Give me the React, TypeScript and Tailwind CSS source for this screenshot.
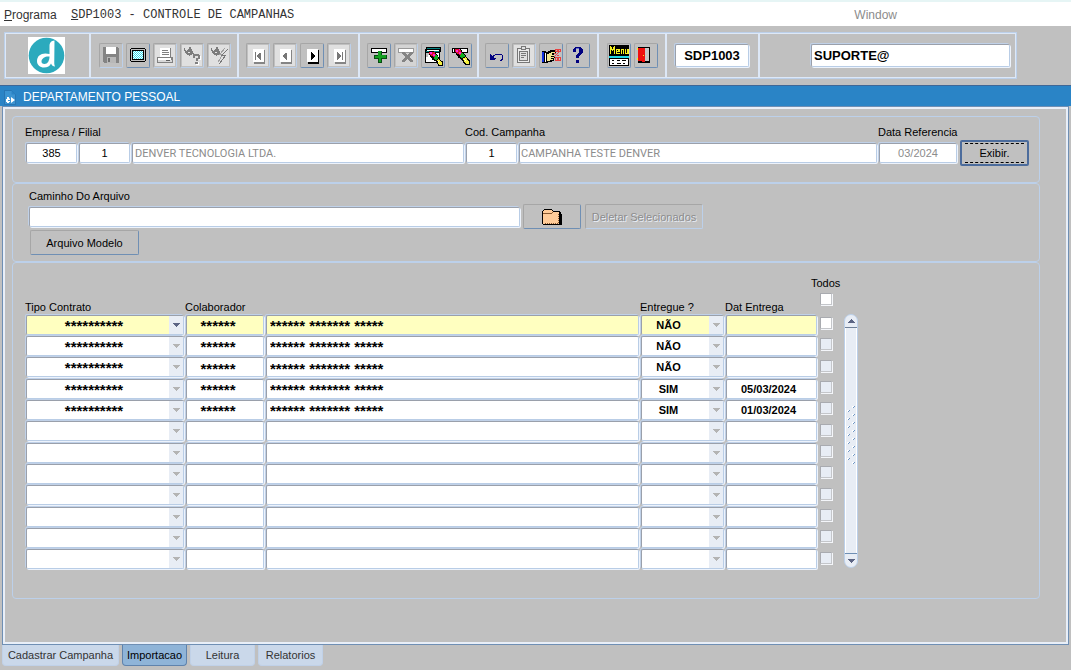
import { useState } from "react"
import type { ReactNode } from "react"

const fieldClass =
  "block min-w-0 rounded-[2px] border border-t-[#9aa0ab] border-l-[#9aa0ab] border-r-[#b9cde6] border-b-[#b9cde6] leading-[14px] shadow-[1px_1px_0_#edf3fc,-1px_-1px_0_#c0d1e8] outline-none"

const editable = "bg-white text-[11px] text-black"
const readOnlyText = "bg-white text-[11px] text-[#8c8c8c]"

const buttonClass =
  "flex items-center justify-center rounded-[2px] border border-t-[#a6a6a6] border-l-[#a6a6a6] border-r-[#6f8fb4] border-b-[#6f8fb4] text-[11px] leading-[14px] text-black disabled:border-r-[#bcd0ea] disabled:border-b-[#bcd0ea] disabled:text-[#8c8c8c]"

const rows = [
  { tipo: "**********", codigo: "******", nome: "****** ******* *****", entregue: "NÃO", data: "" },
  { tipo: "**********", codigo: "******", nome: "****** ******* *****", entregue: "NÃO", data: "" },
  { tipo: "**********", codigo: "******", nome: "****** ******* *****", entregue: "NÃO", data: "" },
  { tipo: "**********", codigo: "******", nome: "****** ******* *****", entregue: "SIM", data: "05/03/2024" },
  { tipo: "**********", codigo: "******", nome: "****** ******* *****", entregue: "SIM", data: "01/03/2024" },
  ...Array.from({ length: 7 }, () => ({ tipo: "", codigo: "", nome: "", entregue: "", data: "" })),
]

const tabs = [
  { name: "Cadastrar Campanha", width: "w-[117px]" },
  { name: "Importacao", width: "w-[65px]" },
  { name: "Leitura", width: "w-[65px]" },
  { name: "Relatorios", width: "w-[65px]" },
]

type Tool = { label: string; disabled?: boolean; icon: ReactNode }

const page = (color: string, shadow: string, glyph: ReactNode, back?: string) => (
  <>
    {back && <path fill={back} d="M1 1h20v21H1z" />}
    <path fill={shadow} d="M7 6h11v14H7z" />
    <path fill="#fff" d="M6 5h11v13H6z" />
    <g fill={color}>{glyph}</g>
  </>
)

const brush = (
  <>
    <path fill="#000" d="M6 4h5v1h1v1h1v2h1v1h1v1h1v1h1v2h1v1h1v1h1v1h1v5h-5v-1h-1v-1h-1v-2h-1v-1h-1v-1h-1v-1H9v-2H8v-1H7V9H6V8H5V5h1z" />
    <path fill="#e01030" d="M6 5h5v1h1v2h1v3h-3v-1H8V9H7V8H6z" />
    <path fill="#ff20e8" d="M7 6h2v2H7zM10 8h2v2h-2zM10 5h1v1h-1z" />
    <path fill="#10b020" d="M12 9h2v1h1v1h1v2h-2v1h-2v-1h-1v-2h1z" />
    <path fill="#f4f040" d="M14 14h2v-1h1v1h1v2h1v1h1v3h-3v-1h-1v-1h-1v-2h-1z" />
    <path fill="#fff" d="M15 15h1v1h1v1h-1v-1h-1z" />
  </>
)

const lamp = (
  <>
    <path fill="#7c7c7c" d="M3 4h1v2h1v1h1V6h1V5h1V3h2v2h1v2h1v2h1v1h-2v1H9v1H8v-1H6v-1H5V9H4V7H3z" />
    <path fill="#e4e4e4" d="M7 8h2v1H7z" />
  </>
)

const fileTools: Tool[] = [
  {
    label: "Salvar",
    disabled: true,
    icon: (
      <>
        <path fill="#848484" d="M3 3h15v1h1v15H4v-1H3z" />
        <path fill="#fff" d="M6 3h10v7H6z" />
        <path fill="#b8b8b8" d="M7 13h9v6H7z" />
        <path fill="#707070" d="M8 14h2v4H8z" />
      </>
    ),
  },
  {
    label: "Tela",
    icon: (
      <>
        <path fill="#000" d="M4 4h14v1h1v12h-1v1H4v-1H3V5h1z" />
        <path fill="#c0c0c0" d="M4 5h14v12H4z" />
        <path fill="#000" d="M5 6h12v10H5z" />
        <path fill="#fff" d="M6 7h10v8H6z" />
        <path
          fill="#30dcec"
          d="M6 7h1v1H6zM8 7h1v1H8zM10 7h1v1h-1zM12 7h1v1h-1zM14 7h1v1h-1zM7 8h1v1H7zM9 8h1v1H9zM11 8h1v1h-1zM13 8h1v1h-1zM15 8h1v1h-1zM6 9h1v1H6zM8 9h1v1H8zM10 9h1v1h-1zM12 9h1v1h-1zM14 9h1v1h-1zM7 10h1v1H7zM9 10h1v1H9zM11 10h1v1h-1zM13 10h1v1h-1zM15 10h1v1h-1zM6 11h1v1H6zM8 11h1v1H8zM10 11h1v1h-1zM12 11h1v1h-1zM14 11h1v1h-1zM7 12h1v1H7zM9 12h1v1H9zM11 12h1v1h-1zM13 12h1v1h-1zM15 12h1v1h-1zM6 13h1v1H6zM8 13h1v1H8zM10 13h1v1h-1zM12 13h1v1h-1zM14 13h1v1h-1zM7 14h1v1H7zM9 14h1v1H9zM11 14h1v1h-1zM13 14h1v1h-1zM15 14h1v1h-1z"
        />
      </>
    ),
  },
  {
    label: "Imprimir",
    disabled: true,
    icon: (
      <>
        <path fill="#e0e0e0" d="M1 1h20v21H1z" />
        <path fill="#808080" d="M6 4h11v10H6zM3 13h16v6H3z" />
        <path fill="#fff" d="M6 4h10v9H6zM4 14h13v2H4z" />
        <path fill="#808080" d="M8 6h6v1H8zM8 8h7v1H8zM8 10h7v1H8z" />
        <path fill="#d8d8d8" d="M4 16h14v2H4z" />
        <path fill="#606060" d="M12 16h4v1h-4z" />
      </>
    ),
  },
  {
    label: "Entrar consulta",
    disabled: true,
    icon: (
      <>
        <path fill="#e0e0e0" d="M1 1h20v21H1z" />
        {lamp}
        <path fill="#808080" d="M12 10h6v1h1v4h-2v2h-2v-3h2v-2h-3v2h-2zM14 18h3v2h-3z" />
        <path fill="#fff" d="M19 12h1v4h-2v-1h1zM17 18h1v3h-3v-1h2z" />
      </>
    ),
  },
  {
    label: "Executar consulta",
    disabled: true,
    icon: (
      <>
        <path fill="#e0e0e0" d="M1 1h20v21H1z" />
        {lamp}
        <path fill="none" stroke="#a0a0a0" d="M17 4l-5 6h3l-5 8" />
        <path fill="none" stroke="#787878" d="M20 5l-6 6h4l-7 9" />
      </>
    ),
  },
]

const navTools: Tool[] = [
  {
    label: "Primeiro",
    disabled: true,
    icon: page("#777", "#858585", <path d="M8 8h1v8H8zM14 8v8h-1v-1h-1v-1h-1v-1h-1v-2h1v-1h1V9h1z" />, "#e0e0e0"),
  },
  {
    label: "Anterior",
    disabled: true,
    icon: page("#777", "#858585", <path d="M13 8v8h-1v-1h-1v-1h-1v-1H9v-2h1v-1h1V9h1z" />, "#e0e0e0"),
  },
  { label: "Proximo", icon: page("#000", "#000", <path d="M10 8v8h1v-1h1v-1h1v-1h1v-2h-1v-1h-1V9h-1z" />) },
  {
    label: "Ultimo",
    disabled: true,
    icon: page("#777", "#858585", <path d="M9 8v8h1v-1h1v-1h1v-1h1v-2h-1v-1h-1V9h-1zM14 8h1v8h-1z" />, "#e0e0e0"),
  },
]

const slip = (stroke: string) => (
  <>
    <path fill={stroke} d="M3 4h16v5H3z" />
    <path fill="#fff" d="M4 5h14v3H4z" />
  </>
)

const editTools: Tool[] = [
  {
    label: "Inserir",
    icon: (
      <>
        {slip("#000")}
        <path fill="#064d10" d="M10 7h4v4h5v4h-5v4h-4v-4H6v-4h4z" />
        <path fill="#12a020" d="M10 7h3v4h5v3h-5v4h-2v-4H7v-2h3z" />
      </>
    ),
  },
  {
    label: "Remover",
    disabled: true,
    icon: (
      <>
        <path fill="#d4d4d4" d="M1 1h20v21H1z" />
        {slip("#999")}
        <path
          fill="#848484"
          d="M7 8h3v1h1v1h1v1h1v-1h1V9h1V8h3v2h-1v1h-1v1h-1v2h1v1h1v1h1v2h-3v-1h-1v-1h-1v-1h-1v1h-1v1h-1v1H7v-2h1v-1h1v-1h1v-2H9v-1H8v-1H7z"
        />
      </>
    ),
  },
  {
    label: "Limpar bloco",
    icon: (
      <>
        <path fill="#000" d="M4 3h15v5h-1v11H3V5h1z" />
        <path fill="#008080" d="M5 4h13v1H5zM4 7h13v1H4z" />
        <path fill="#fff" d="M5 6h12v1H5zM4 9h13v9H4z" />
        <path fill="#c0c0c0" d="M4 9h3v2H6v2H4z" />
        <g transform="translate(2 3) scale(.9)">{brush}</g>
      </>
    ),
  },
  {
    label: "Limpar registro",
    icon: (
      <>
        {slip("#000")}
        {brush}
      </>
    ),
  },
]

const helpTools: Tool[] = [
  {
    label: "Desfazer",
    icon: (
      <>
        <path fill="none" stroke="#000080" d="M7 13c2-4 9-4 10 0 0 2-1 3-3 4" />
        <path fill="#000080" d="M4 10h1v1h1v1h1v1h1v1h2v1H9v1H4z" />
      </>
    ),
  },
  {
    label: "Colar",
    disabled: true,
    icon: (
      <>
        <path fill="#e0e0e0" d="M1 1h20v21H1z" />
        <path fill="#ececec" stroke="#777" d="M4.500 4.500h12v14h-12z" />
        <path fill="#e0e0e0" stroke="#777" d="M8.500 2.500h4v3h-4zM6.500 7.500h8v9h-8z" />
        <path fill="#777" d="M8 9h5v1H8zM8 11h5v1H8zM8 13h3v1H8z" />
      </>
    ),
  },
  {
    label: "Lista de valores",
    icon: (
      <>
        <path fill="#000" d="M2 7h4v1h2V7h2V6h6v3h-2v3h1v2h-1v3h-2v1H8v1H2z" />
        <path fill="#1030e0" d="M2 8h2v10H2z" />
        <path fill="#fff" d="M5 9h1v9H5z" />
        <path fill="#f4e890" d="M7 10h2V9h2V8h4v1h-3v2h2v1h-3v1h3v1h-3v1h2v1h-3v1H7z" />
        <path
          fill="none"
          stroke="#e84040"
          d="M15.500 5.500h2v2h-2zM18.500 5.500h2v2h-2zM14 9l5 3M19 8l-5 5M15.500 13.500h2v3h-2zM18.500 13.500h2v3h-2z"
        />
      </>
    ),
  },
  {
    label: "Ajuda",
    icon: (
      <>
        <path fill="#000080" d="M8 3h6v1h1v1h1v4h-1v1h-1v1h-1v1h-1v2h-3v-3h1v-1h1V9h1V5H9v3H6V5h1V4h1zM9 16h3v3H9z" />
        <path fill="#6870c8" d="M9 4h3v1H9z" />
      </>
    ),
  },
]

const exitTools: Tool[] = [
  {
    label: "Menu",
    icon: (
      <>
        <path fill="#000" d="M1 1h20v11H1z" />
        <path
          fill="none"
          stroke="#f4f020"
          strokeWidth="1.200"
          d="M2.500 10V3l2 3 2-3v7M12 9.500H8.500v-4H11v2H9M13.500 10V5.500h2V10M17.500 5v4.500h2.500V5"
        />
        <path fill="#20d8e8" d="M1 12h20v2H1z" />
        <path fill="#000" d="M1 14h20v8H1z" />
        <path fill="#fff" d="M2 15h18v6H2z" />
        <path fill="#000" d="M4 16h2v1H4zM9 16h3v1H9zM14 16h4v1h-4zM4 19h2v1H4zM9 19h4v1H9zM15 19h2v1h-2z" />
      </>
    ),
  },
  {
    label: "Sair",
    icon: (
      <>
        <path fill="#000" d="M3 3h12v16H3z" />
        <path fill="#c8c8c8" d="M10 4h4v13h-4z" />
        <path fill="#f01010" d="M3 4h7v14H7v-1H3z" />
        <path fill="#f4f020" d="M2 4h1v2H2zM2 14h1v2H2zM8 11h1v1H8z" />
      </>
    ),
  },
]

function ToolGroup({ tools, className }: { tools: Tool[]; className: string }) {
  return (
    <div className={`flex items-center gap-[3px] border-l-2 border-[#dde8f7] ${className}`}>
      {tools.map((tool) => (
        <button
          key={tool.label}
          type="button"
          aria-label={tool.label}
          disabled={tool.disabled}
          className={`${buttonClass} h-[25px] w-[24px] shrink-0`}
        >
          <svg viewBox="0 0 22 23" width="22" height="23" shapeRendering="crispEdges" className="shrink-0">
            {tool.icon}
          </svg>
        </button>
      ))}
    </div>
  )
}

function Logo() {
  return (
    <svg viewBox="0 0 37 37" width="37" height="37">
      <path fill="#fff" d="M0 0h37v37H0z" />
      <circle cx="18.500" cy="18.500" r="17.800" fill="#2caabd" />
      <path
        fill="#fff"
        d="M26.500 3.500c-3.500.5-5 2-5 6v7.500c-7-2-12.500 1-12.500 7 0 4 3 6.500 7 6.500 3.500 0 6-1.500 7-4 .8 2 2 3 4 3-1-2-.7-4-.7-7z"
      />
      <path fill="#2caabd" d="M21.500 19.500c-4-.5-7.500 1.500-8 4.500-.3 2 1 3 3 3 3 0 5-3 5-7.500z" />
    </svg>
  )
}

function DropDown({
  label,
  value,
  active,
  className,
}: {
  label: string
  value: string
  active?: boolean
  className: string
}) {
  return (
    <div className="relative">
      <select
        aria-label={label}
        defaultValue={value}
        className={`${fieldClass} h-[20px] w-full appearance-none text-center font-bold ${className}`}
      >
        <option value={value}>{value}</option>
      </select>
      <span className="pointer-events-none absolute top-px right-px bottom-px flex w-[14px] items-center justify-center bg-[#e8edf5]">
        <svg viewBox="0 0 7 4" width="7" height="4" shapeRendering="crispEdges">
          <path fill={active ? "#5c6584" : "#b4b4b4"} d="M0 0h7v1H6v1H5v1H4v1H3V3H2V2H1V1H0z" />
        </svg>
      </span>
    </div>
  )
}

function Tick({ label, enabled }: { label: string; enabled?: boolean }) {
  return (
    <input
      type="checkbox"
      aria-label={label}
      disabled={!enabled}
      className="block size-[12px] appearance-none border border-t-[#a9abb0] border-l-[#a9abb0] border-r-[#c4c6ca] border-b-[#c4c6ca] bg-white shadow-[1px_1px_0_#f4f6fa] checked:bg-[#5c6584] disabled:bg-[#e8edf5]"
    />
  )
}

function ScrollBar() {
  return (
    <div className="mt-[51px] flex h-[254px] w-[14px] shrink-0 flex-col overflow-hidden rounded-full border border-[#bcd0ea] bg-[#e8edf5]">
      <button type="button" aria-label="Subir" className="flex h-[13px] items-center justify-center border-b border-[#6f8098]">
        <svg viewBox="0 0 7 4" width="7" height="4" shapeRendering="crispEdges">
          <path fill="#5c6584" d="M3 0h1v1h1v1h1v1h1v1H0V3h1V2h1V1h1z" />
        </svg>
      </button>
      <div className="flex flex-1 items-center justify-center border-x border-white pb-[10px]">
        <svg width="10" height="60" shapeRendering="crispEdges">
          {Array.from({ length: 15 }, (_, i) => (
            <g key={i} transform={`translate(${i % 2 ? 1 : 6} ${i * 4})`}>
              <path fill="#fff" d="M0 0h2v1H1v1H0z" />
              <path fill="#6f96c4" d="M2 0h1v1H2v1H1V1h1z" />
            </g>
          ))}
        </svg>
      </div>
      <button type="button" aria-label="Descer" className="flex h-[14px] items-center justify-center border-t border-[#6f8fb4]">
        <svg viewBox="0 0 7 4" width="7" height="4" shapeRendering="crispEdges">
          <path fill="#5c6584" d="M0 0h7v1H6v1H5v1H4v1H3V3H2V2H1V1H0z" />
        </svg>
      </button>
    </div>
  )
}

function Filters() {
  return (
    <section className="flex items-end rounded-[4px] border border-[#bcd0ea] pt-[8px] pr-[10px] pb-[16px] pl-[12px]">
      <div className="min-w-0 flex-[440]">
        <label htmlFor="empresa" className="block leading-[14px]">
          Empresa / Filial
        </label>
        <div className="flex gap-[2px] px-px pt-[4px] pb-[3px]">
          <input id="empresa" defaultValue="385" className={`${fieldClass} ${editable} h-[20px] w-[51px] text-center`} />
          <input
            aria-label="Filial"
            defaultValue="1"
            className={`${fieldClass} ${editable} h-[20px] w-[51px] text-center`}
          />
          <input
            aria-label="Nome da empresa"
            readOnly
            defaultValue="DENVER TECNOLOGIA LTDA."
            className={`${fieldClass} ${readOnlyText} h-[20px] flex-1 pl-[2px] font-[Roboto]`}
          />
        </div>
      </div>
      <div className="min-w-0 flex-[413]">
        <label htmlFor="campanha" className="block leading-[14px]">
          Cod. Campanha
        </label>
        <div className="flex gap-[2px] px-px pt-[4px] pb-[3px]">
          <input id="campanha" defaultValue="1" className={`${fieldClass} ${editable} h-[20px] w-[51px] text-center`} />
          <input
            aria-label="Nome da campanha"
            readOnly
            defaultValue="CAMPANHA TESTE DENVER"
            className={`${fieldClass} ${readOnlyText} h-[20px] flex-1 pl-px font-[Roboto]`}
          />
        </div>
      </div>
      <div className="w-[82px]">
        <label htmlFor="referencia" className="block leading-[14px]">
          Data Referencia
        </label>
        <div className="pt-[4px] pr-[3px] pb-[3px] pl-px">
          <input
            id="referencia"
            readOnly
            defaultValue="03/2024"
            className={`${fieldClass} ${readOnlyText} h-[20px] w-full text-center`}
          />
        </div>
      </div>
      <button
        type="button"
        className="h-[26px] w-[69px] shrink-0 rounded-[2px] border-2 border-[#4c6c9c] px-[3px] leading-[14px]"
      >
        <span className="block border-y border-dashed border-black py-[2px]">Exibir.</span>
      </button>
    </section>
  )
}

function FileSection() {
  return (
    <section className="rounded-[4px] border border-[#bcd0ea] pt-[5px] pb-[6px] pl-[16px]">
      <label htmlFor="arquivo" className="block leading-[14px]">
        Caminho Do Arquivo
      </label>
      <div className="flex items-center pt-px">
        <input id="arquivo" className={`${fieldClass} ${editable} h-[20px] w-[491px]`} />
        <button type="button" aria-label="Abrir arquivo" className={`${buttonClass} ml-[3px] h-[25px] w-[58px]`}>
          <svg viewBox="0 0 20 16" width="20" height="16" shapeRendering="crispEdges">
            <path fill="#000" d="M1 1h1V0h8v1h1v1h7v1h1v2h1v11H1v-1H0V2h1z" />
            <path fill="#fc9" d="M2 1h8v1h1v1h6v12H1V2h1z" />
            <path fill="none" stroke="#8a5a30" d="M1 4.500h8l2-1" />
            <path stroke="#8a5a30" strokeDasharray="1 1" d="M3 14.500h14M16.500 5v10" />
          </svg>
        </button>
        <button
          type="button"
          disabled
          className={`${buttonClass} ml-[4px] h-[25px] w-[118px] [text-shadow:1px_1px_0_#e8edf5]`}
        >
          Deletar Selecionados
        </button>
      </div>
      <button type="button" className={`${buttonClass} mt-px ml-px h-[25px] w-[109px]`}>
        Arquivo Modelo
      </button>
    </section>
  )
}

function Contracts() {
  return (
    <section className="flex rounded-[4px] border border-[#bcd0ea] pr-[181px] pb-[28px] pl-[12px]">
      <table className="mt-[13px] h-[294px] flex-1 table-fixed border-separate border-spacing-0">
        <colgroup>
          <col className="w-[160px]" />
          <col className="w-[80px]" />
          <col />
          <col className="w-[85px]" />
          <col className="w-[93px]" />
          <col className="w-[26px]" />
        </colgroup>
        <thead>
          <tr className="h-[38px] text-left align-bottom leading-[14px]">
            <th className="p-0 font-normal">Tipo Contrato</th>
            <th className="p-0 font-normal" colSpan={2}>
              Colaborador
            </th>
            <th className="p-0 font-normal">Entregue ?</th>
            <th className="p-0 font-normal">Dat Entrega</th>
            <th className="p-0 pb-[9px] pl-[2px] font-normal">
              <label className="flex flex-col gap-[3px]">
                <span className="-ml-[9px]">Todos</span>
                <Tick label="Todos" enabled />
              </label>
            </th>
          </tr>
        </thead>
        <tbody>
          {rows.map((row, index) => {
            const first = index === 0
            const fill = first ? "bg-[#ffffc0]" : "bg-white"
            return (
              <tr key={index}>
                <td className="p-0 pr-px pl-px">
                  <DropDown
                    label="Tipo Contrato"
                    value={row.tipo}
                    active={first}
                    className={`${fill} pt-[2px] pr-[22px] text-[15px] text-black`}
                  />
                </td>
                <td className="p-0 pr-px pl-px">
                  <input
                    aria-label="Colaborador"
                    defaultValue={row.codigo}
                    className={`${fieldClass} ${fill} h-[20px] w-full pt-[2px] pr-[14px] text-center text-[15px] font-bold`}
                  />
                </td>
                <td className="p-0 pr-px pl-px">
                  <input
                    aria-label="Nome do colaborador"
                    defaultValue={row.nome}
                    className={`${fieldClass} ${fill} h-[20px] w-full pt-[2px] pl-[3px] text-[15px] font-bold`}
                  />
                </td>
                <td className="p-0 pr-px pl-px">
                  <DropDown
                    label="Entregue"
                    value={row.entregue}
                    className={`${fill} pr-[28px] text-[11px] text-black`}
                  />
                </td>
                <td className="p-0 pr-px pl-px">
                  <input
                    aria-label="Dat Entrega"
                    defaultValue={row.data}
                    className={`${fieldClass} ${fill} h-[20px] w-full pr-[6px] text-center text-[11px] font-bold`}
                  />
                </td>
                <td className="p-0 pb-[3px] pl-[2px]">
                  <Tick label={`Selecionar linha ${index + 1}`} enabled={first} />
                </td>
              </tr>
            )
          })}
        </tbody>
      </table>
      <ScrollBar />
    </section>
  )
}

export default function App() {
  const [tab, setTab] = useState("Importacao")

  return (
    <div className="flex min-h-screen flex-col bg-[#c0c0c0] font-['Liberation_Sans',Arial,sans-serif] text-[11px] text-black">
      <nav className="flex h-[26px] items-center border-t-2 border-[#e6f5f5] bg-white pt-px pl-[4px] text-[12px] text-[#333]">
        <a href="#programa" className="w-[67px]">
          <u>P</u>rograma
        </a>
        <a href="#sdp1003" className="font-['Liberation_Mono',monospace]">
          <u>S</u>DP1003 - CONTROLE DE CAMPANHAS
        </a>
        <a href="#window" className="mr-[174px] ml-auto text-[#8c8c8c]">
          Window
        </a>
      </nav>

      <header className="mt-[6px] mr-[54px] ml-[4px] flex h-[47px] border-2 border-[#dde8f7] outline-1 -outline-offset-1 outline-[#bcd0ea]">
        <div className="flex w-[83px] shrink-0 items-center justify-center pr-[2px]">
          <Logo />
        </div>
        <ToolGroup tools={fileTools} className="w-[148px] pl-[8px]" />
        <ToolGroup tools={navTools} className="w-[121px] pl-[7px]" />
        <ToolGroup tools={editTools} className="w-[119px] pl-[7px]" />
        <ToolGroup tools={helpTools} className="w-[120px] pl-[6px]" />
        <ToolGroup tools={exitTools} className="w-[68px] pl-[8px]" />
        <div className="flex w-[93px] items-center border-l-2 border-[#dde8f7] pr-[9px] pl-[8px]">
          <input
            aria-label="Programa"
            readOnly
            defaultValue="SDP1003"
            className={`${fieldClass} h-[23px] w-full bg-white text-center text-[13px] font-bold`}
          />
        </div>
        <div className="flex flex-1 items-center justify-end border-l-2 border-[#dde8f7] pr-[5px]">
          <input
            aria-label="Usuario"
            defaultValue="SUPORTE@"
            className={`${fieldClass} h-[23px] w-[199px] bg-white pl-[2px] text-[13px] font-bold`}
          />
        </div>
      </header>

      <h1 className="mt-[6px] flex h-[21px] items-center gap-[7px] border-t border-[#3f6796] bg-[#2a84c6] pt-[2px] pl-[4px] text-[12px] text-white">
        <svg viewBox="0 0 12 15" width="12" height="15">
          <path fill="#3c94d2" stroke="#2168a4" strokeWidth=".6" d="M.5.500h7l4 4v10H.500z" />
          <path fill="#2a84c6" d="M7.500.500v4h4z" />
          <path fill="#fff" d="M7 7l4 3-4 3zM5 7v1.500h1V10H4v1h2v1H5v1H3v-1H2V9h1V7z" />
        </svg>
        DEPARTAMENTO PESSOAL
      </h1>

      <main className="mr-[2px] ml-[2px] border border-[#6f8fb4]">
        <div className="border-2 border-[#e9eff8] pt-[7px] pr-[26px] pb-[43px] pl-[7px]">
          <Filters />
          <FileSection />
          <Contracts />
        </div>
      </main>

      <div role="tablist" className="flex gap-[3px] pl-[2px]">
        {tabs.map(({ name, width }) => (
          <button
            key={name}
            type="button"
            role="tab"
            aria-selected={tab === name}
            onClick={() => setTab(name)}
            className={`h-[21px] rounded-b-[4px] border border-t-0 leading-[14px] whitespace-nowrap ${width} ${
              tab === name ? "border-[#5f83ad] bg-[#8fb4d8] text-black" : "border-[#c0d1e8] bg-[#cad8ea] text-[#333]"
            }`}
          >
            {name}
          </button>
        ))}
      </div>
    </div>
  )
}
